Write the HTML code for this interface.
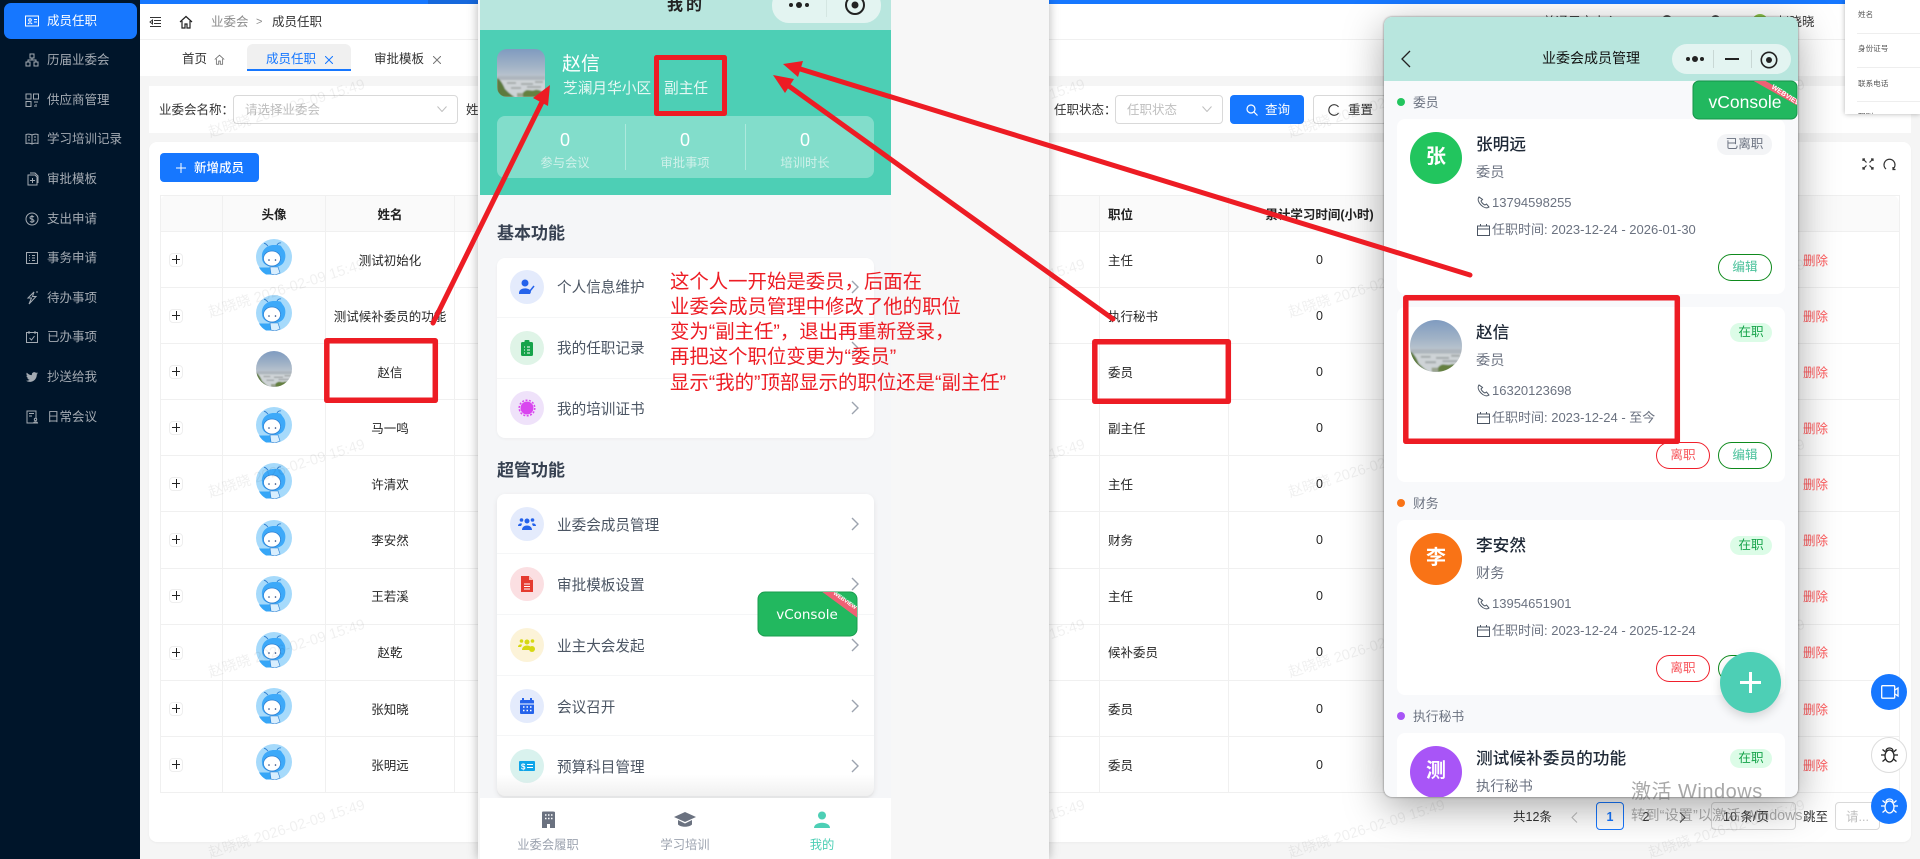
<!DOCTYPE html>
<html lang="zh-CN"><head><meta charset="utf-8"><title>成员任职</title>
<style>
*{box-sizing:border-box}
html,body{margin:0;padding:0;width:1920px;height:859px;overflow:hidden;background:#f5f5f5;font-family:"Liberation Sans","Noto Sans CJK SC",sans-serif;color:#262626}
div,svg,span{position:absolute}
#root{left:0;top:0;width:1920px;height:859px;overflow:hidden}
.t{position:absolute;white-space:nowrap;line-height:20px;height:20px;font-size:12.5px}
.c{transform:translateX(-50%)}
.m{color:#a4abb3;left:47px}
.i{position:absolute;left:25px;width:14px;height:14px;fill:none;stroke:#a4abb3;stroke-width:1}
.w{position:absolute;left:0;font-size:14.6px;color:rgba(0,0,0,.06);transform:rotate(-17.5deg);transform-origin:0 100%;line-height:20px;white-space:nowrap}
.w.l{line-height:10px;height:10px;transform-origin:0 50%;top:848.500px}
.hl{position:absolute;left:160px;width:1739px;height:1px;background:#f0f0f0}
.vl{position:absolute;top:195px;height:597px;width:1px;background:#f0f0f0}
.plus{position:absolute;left:169px;width:14px;height:14px;border:1px solid #eee;border-radius:4px;background:#fff}
.plus:before{content:"";position:absolute;left:2px;top:5px;width:8px;height:1px;background:#222}
.plus:after{content:"";position:absolute;left:6px;top:1px;width:1px;height:9px;background:#222}
.av{position:absolute;left:256px;width:36px;height:36px}
.th{font-weight:700;color:#222;margin-top:1px}
.del{left:1803px;color:#ff5a5c;margin-top:1px}
.ic{position:absolute;left:510px;width:34px;height:34px;border-radius:50%}
.ic svg{left:8px;top:8px;width:18px;height:18px}
.mt{left:557px;font-size:14.6px;color:#4b5563;margin-top:2px}
.chev{position:absolute;left:851px;width:8px;height:14px;fill:none;stroke:#9ca3af;stroke-width:1.4}
.dv{position:absolute;left:497px;width:377px;height:1px;background:#f5f6f7}
.card{position:absolute;left:1397px;width:388px;height:175px;background:#fff;border-radius:8px}
.ava{position:absolute;left:1410px;width:52px;height:52px;border-radius:50%;color:#fff;font-size:20px;font-weight:700;text-align:center;line-height:50px}
.nm{left:1476px;font-size:16.7px;font-weight:500;color:#1f2937;margin-top:1px}
.ro{left:1476px;font-size:14.2px;color:#6b7280;margin-top:1px}
.ph{left:1492px;font-size:13px;color:#6b7280;margin-top:1px}
.btn{position:absolute;width:54px;height:27px;border-radius:14px;background:#fff;font-size:12.6px;line-height:25px;text-align:center}
.ed{left:1718px;border:1px solid #0f8a1d;color:#49c19a}
.lz{left:1656px;border:1px solid #f01f2b;color:#f7545a}
.bd{position:absolute;left:1730px;width:42px;height:19px;border-radius:10px;background:#dcfce7;color:#16a34a;font-size:12.6px;line-height:19px;text-align:center}
.sm{position:absolute;left:1477px;width:13px;height:13px;fill:none;stroke:#4b5563;stroke-width:1}
.dot{position:absolute;left:1397px;width:8px;height:8px;border-radius:50%}
.sec{left:1413px;font-size:12.8px;color:#6b7280;margin-top:1px}
.pop{left:1858px;font-size:7.6px;color:#555}
.fb{position:absolute;left:1871px;width:36px;height:36px;border-radius:50%}
.an{left:670px;font-size:19.4px;color:#ed1c24}
</style></head><body>

<svg width="0" height="0" style="position:absolute">
<defs>
<linearGradient id="sky" x1="0" y1="0" x2="0" y2="1"><stop offset="0" stop-color="#7f9bc0"/><stop offset=".35" stop-color="#a0b2c6"/><stop offset=".62" stop-color="#c0c8d0"/><stop offset="1" stop-color="#c0c8d0"/></linearGradient>
<filter id="sf" x="-10%" y="-10%" width="120%" height="120%"><feGaussianBlur stdDeviation=".7"/></filter>
<symbol id="bot" viewBox="0 0 36 36">
<circle cx="18" cy="18" r="18" fill="#a6dafb"/>
<path d="M12 7C10 5 9 4 8 4.500M21 6C22 4 24 3.500 25 4" stroke="#2f7fd0" stroke-width=".9" fill="none"/>
<path d="M6 19C5 11 11 6 18 6c3 0 6 0 7 1l2 3c2 2 3 6 2 10-1 5-5 8-11 8S6 25 6 19z" fill="#3da9f9"/>
<ellipse cx="16" cy="19.500" rx="8.500" ry="7.500" fill="#fff" stroke="#2f7fd0" stroke-width=".7"/>
<circle cx="13" cy="21" r=".8" fill="#22407a"/><circle cx="19.500" cy="21" r=".8" fill="#22407a"/>
<path d="M3 28.500h11l3 1 2 6H10A18 18 0 0 1 3 28.500z" fill="#36a6f7"/>
<path d="M14 28h8l2 6-5 2-4-1z" fill="#d8eefe" stroke="#2f7fd0" stroke-width=".6"/>
</symbol>
<symbol id="land" viewBox="0 0 48 48">
<rect width="48" height="48" fill="url(#sky)"/>
<g filter="url(#sf)">
<path d="M0 27h48v5H0z" fill="#aeb6bd"/>
<path d="M0 31h48v17H0z" fill="#ced3d6"/>
<path d="M10 33h9v2h-9zM24 34h12v2H24zM38 32h8v2h-8zM14 38h10v2H14zM30 37h14v2H30z" fill="#a7adaf"/>
<path d="M0 29c3 1 6 6 8 11 3 3 6 6 10 8H0z" fill="#5d7a3c"/>
<path d="M24 48c1-4 3-6 6-7 3 0 5 1 8 0 4-1 7 2 10 3v4z" fill="#65803f"/>
<path d="M20 44h6v4h-6z" fill="#9aa38f"/>
</g>
</symbol>
</defs></svg>

<div id="root">
<!-- sidebar -->
<div style="left:0;top:0;width:140px;height:859px;background:#00152a"></div>
<div style="left:4px;top:3px;width:133px;height:36px;background:#1677ff;border-radius:7px"></div>
<svg class="i" style="top:14px;stroke:#fff" viewBox="0 0 14 14"><rect x=".5" y="2" width="13" height="10"/><circle cx="5" cy="6" r="1.300"/><path d="M3 10c.5-1.500 3.500-1.500 4 0M9 5.500h3M9 8h3"/></svg>
<div class="t m" style="top:11px;color:#fff">成员任职</div>
<svg class="i" style="top:53px" viewBox="0 0 14 14"><rect x="5" y="1" width="4" height="4"/><rect x="1" y="9" width="4" height="4"/><rect x="9" y="9" width="4" height="4"/><path d="M7 5v2M3 9V7h8v2"/></svg>
<div class="t m" style="top:50px">历届业委会</div>
<svg class="i" style="top:93px" viewBox="0 0 14 14"><rect x="1" y="1" width="5" height="5"/><rect x="8.500" y="1" width="5" height="5"/><rect x="1" y="8.500" width="5" height="5"/><path d="M9 9h4M11 11v3M9 13h1"/></svg>
<div class="t m" style="top:90px">供应商管理</div>
<svg class="i" style="top:132px" viewBox="0 0 14 14"><path d="M7 3C5 2 3 2 1 2.500v9c2-.5 4-.5 6 .5 2-1 4-1 6-.5v-9C11 2 9 2 7 3zM7 3v9M3 5h2M3 8h2M9 5h2M9 8h2"/></svg>
<div class="t m" style="top:129px">学习培训记录</div>
<svg class="i" style="top:172px" viewBox="0 0 14 14"><path d="M3 3h7l2 2v8H3zM5 1h5l3 3v7M7.500 6v5M5 8.500h5"/></svg>
<div class="t m" style="top:169px">审批模板</div>
<svg class="i" style="top:212px" viewBox="0 0 14 14"><circle cx="7" cy="7" r="6"/><path d="M9 5c-1-1-4-1-4 .8 0 2 4 1 4 3 0 1.600-3 1.600-4 .5M7 3v8"/></svg>
<div class="t m" style="top:209px">支出申请</div>
<svg class="i" style="top:251px" viewBox="0 0 14 14"><rect x="1.500" y="1.500" width="11" height="11"/><path d="M4 4.500h1M4 7h1M4 9.500h1M7 4.500h3M7 7h3M7 9.500h3"/></svg>
<div class="t m" style="top:248px">事务申请</div>
<svg class="i" style="top:291px" viewBox="0 0 14 14"><path d="M9 1 3 7h3.500L4 13l7-7.500H7.500zM11 1l2 0"/></svg>
<div class="t m" style="top:288px">待办事项</div>
<svg class="i" style="top:330px" viewBox="0 0 14 14"><rect x="1.500" y="2.500" width="11" height="10"/><path d="M4 1v3M10 1v3M4.500 8l2 2 3-4"/></svg>
<div class="t m" style="top:327px">已办事项</div>
<svg style="left:26px;top:371px;width:12px;height:12px" viewBox="0 0 24 24"><path fill="#a4abb3" d="M23.950 4.570a10 10 0 0 1-2.820.77 4.960 4.960 0 0 0 2.160-2.720c-.95.55-2 .96-3.120 1.180a4.920 4.920 0 0 0-8.380 4.480A13.980 13.980 0 0 1 1.670 3.150a4.920 4.920 0 0 0 1.520 6.570 4.900 4.900 0 0 1-2.230-.61v.06a4.920 4.920 0 0 0 3.950 4.830 4.900 4.900 0 0 1-2.220.08 4.930 4.930 0 0 0 4.600 3.420A9.870 9.870 0 0 1 0 19.540a13.940 13.940 0 0 0 7.550 2.210c9.050 0 14-7.500 14-14 0-.21 0-.43-.02-.64a10 10 0 0 0 2.460-2.550z"/></svg>
<div class="t m" style="top:367px">抄送给我</div>
<svg class="i" style="top:410px" viewBox="0 0 14 14"><path d="M11 8V1H2v12h6M4 3.500h5M4 6h3"/><circle cx="10.500" cy="9.500" r="1.200"/><path d="M8.500 13c.3-1.500 3.700-1.500 4 0z"/></svg>
<div class="t m" style="top:407px">日常会议</div>

<!-- top bars -->
<div style="left:140px;top:0;width:288px;height:4px;background:#1677ff"></div>
<div style="left:428px;top:0;width:52px;height:4px;background:#1668dc"></div>
<div style="left:1049px;top:0;width:800px;height:4px;background:#1677ff"></div>
<div style="left:140px;top:4px;width:1780px;height:35px;background:#fff"></div>
<div style="left:140px;top:39px;width:1780px;height:1px;background:#f0f0f0"></div>
<div style="left:140px;top:40px;width:1780px;height:36px;background:#fff"></div>
<svg style="left:149px;top:16px;width:13px;height:12px;fill:none;stroke:#333;stroke-width:1" viewBox="0 0 13 12"><path d="M1 1.500h11M5 4.500h7M5 7.500h7M1 10.500h11M3.500 4 1 6l2.500 2z"/></svg>
<svg style="left:179px;top:15px;width:14px;height:14px;fill:none;stroke:#222;stroke-width:1.200" viewBox="0 0 14 14"><path d="M1 7 7 1.500 13 7M3 6v7h3V9h2v4h3V6"/></svg>
<div class="t" style="left:211px;top:12px;color:#8c8c8c">业委会</div>
<div class="t" style="left:256px;top:12px;color:#8c8c8c;font-size:11px">&gt;</div>
<div class="t" style="left:272px;top:12px;color:#333">成员任职</div>

<div class="t" style="left:182px;top:49px;color:#333">首页</div>
<svg style="left:214px;top:54px;width:11px;height:11px;fill:none;stroke:#666;stroke-width:1" viewBox="0 0 14 14"><path d="M1 7 7 1.500 13 7M3 6v7h3V9h2v4h3V6"/></svg>
<div style="left:247px;top:44px;width:104px;height:27px;background:#f0f0f0;border-radius:6px 6px 0 0;border-bottom:2px solid #1677ff"></div>
<div class="t" style="left:266px;top:49px;color:#1677ff">成员任职</div>
<svg style="left:325px;top:56px;width:8px;height:8px;stroke:#1677ff;stroke-width:1" viewBox="0 0 8 8"><path d="M0 0l8 8M8 0 0 8"/></svg>
<div class="t" style="left:374px;top:49px;color:#333">审批模板</div>
<svg style="left:433px;top:56px;width:8px;height:8px;stroke:#777;stroke-width:1" viewBox="0 0 8 8"><path d="M0 0l8 8M8 0 0 8"/></svg>

<!-- top right user info partly hidden -->
<div class="t" style="left:1543px;top:12px;color:#333">普通用户中心</div>
<div style="left:1662px;top:15px;width:10px;height:10px;background:#555;border-radius:5px"></div>
<div style="left:1711px;top:15px;width:9px;height:10px;background:#555;border-radius:5px"></div>
<div style="left:1752px;top:14px;width:16px;height:16px;background:#8bc34a;border-radius:50%"></div>
<div class="t" style="left:1777px;top:12px;font-size:12.5px;color:#333">赵晓晓</div>

<!-- search card -->
<div style="left:149px;top:86px;width:1762px;height:47px;background:#fff"></div>
<div class="t" style="left:159px;top:100px;color:#333">业委会名称：</div>
<div style="left:233px;top:95px;width:225px;height:29px;border:1px solid #d9d9d9;border-radius:4px;background:#fff"></div>
<div class="t" style="left:245px;top:100px;color:#bfbfbf">请选择业委会</div>
<svg style="left:437px;top:106px;width:10px;height:6px;fill:none;stroke:#bfbfbf" viewBox="0 0 10 6"><path d="M.5.500 5 5.500 9.500.500"/></svg>
<div class="t" style="left:466px;top:100px;color:#333">姓名</div>
<div class="t" style="left:1054px;top:100px;color:#333">任职状态：</div>
<div style="left:1115px;top:95px;width:108px;height:29px;border:1px solid #d9d9d9;border-radius:4px;background:#fff"></div>
<div class="t" style="left:1127px;top:100px;color:#bfbfbf">任职状态</div>
<svg style="left:1202px;top:106px;width:10px;height:6px;fill:none;stroke:#bfbfbf" viewBox="0 0 10 6"><path d="M.5.500 5 5.500 9.500.500"/></svg>
<div style="left:1230px;top:95px;width:74px;height:29px;background:#1677ff;border-radius:4px"></div>
<svg style="left:1246px;top:104px;width:12px;height:12px;fill:none;stroke:#fff;stroke-width:1.200" viewBox="0 0 12 12"><circle cx="5" cy="5" r="4"/><path d="M8 8l3.500 3.500"/></svg>
<div class="t" style="left:1265px;top:100px;color:#fff">查询</div>
<div style="left:1313px;top:95px;width:74px;height:29px;background:#fff;border:1px solid #d9d9d9;border-radius:4px"></div>
<svg style="left:1328px;top:104px;width:12px;height:12px;fill:none;stroke:#333;stroke-width:1.100" viewBox="0 0 12 12"><path d="M10.500 3A5.300 5.300 0 1 0 10.500 9"/></svg>
<div class="t" style="left:1348px;top:100px;color:#333">重置</div>

<!-- main card -->
<div style="left:149px;top:142px;width:1762px;height:700px;background:#fff;border-radius:8px;box-shadow:0 1px 2px rgba(0,0,0,.04)"></div>
<div style="left:160px;top:153px;width:99px;height:29px;background:#1677ff;border-radius:4px"></div>
<svg style="left:175px;top:162px;width:12px;height:12px;stroke:#fff" viewBox="0 0 12 12"><path d="M6 1v10M1 6h10"/></svg>
<div class="t" style="left:194px;top:158px;color:#fff;font-weight:500">新增成员</div>
<svg style="left:1862px;top:158px;width:12px;height:12px;fill:none;stroke:#333;stroke-width:1.200" viewBox="0 0 12 12"><path d="M1 1l3.500 3.500M11 1 7.500 4.500M1 11l3.500-3.500M11 11 7.500 7.500M1 3V1h2M9 1h2v2M1 9v2h2M11 9v2H9"/></svg>
<svg style="left:1883px;top:158px;width:13px;height:13px;fill:none;stroke:#333;stroke-width:1.200" viewBox="0 0 13 13"><path d="M3 11A5.500 5.500 0 1 1 10 11M10 9v2.500h2.500"/></svg>

<!-- table -->
<div style="left:160px;top:195px;width:1739px;height:37px;background:#fafafa;border-radius:8px 8px 0 0"></div>
<div class="hl" style="top:195px"></div><div class="hl" style="top:231px"></div><div class="hl" style="top:287px"></div><div class="hl" style="top:343px"></div><div class="hl" style="top:399px"></div><div class="hl" style="top:455px"></div><div class="hl" style="top:511px"></div><div class="hl" style="top:568px"></div><div class="hl" style="top:624px"></div><div class="hl" style="top:680px"></div><div class="hl" style="top:736px"></div><div class="hl" style="top:792px"></div>
<div class="vl" style="left:160px"></div><div class="vl" style="left:222px"></div><div class="vl" style="left:325px"></div><div class="vl" style="left:454px"></div><div class="vl" style="left:1099px"></div><div class="vl" style="left:1228px"></div><div class="vl" style="left:1899px"></div>
<div class="t c th" style="left:274px;top:204px">头像</div>
<div class="t c th" style="left:390px;top:204px">姓名</div>
<div class="t th" style="left:1108px;top:204px">职位</div>
<div class="t c th" style="left:1319.500px;top:204px">累计学习时间(小时)</div>

<div class="plus" style="top:253px"></div><svg class="av" style="top:239px"><use href="#bot"/></svg><div class="t c" style="left:390px;top:251px">测试初始化</div><div class="t" style="left:1108px;top:251px">主任</div><div class="t c" style="left:1319.500px;top:250px">0</div><div class="t del" style="top:250px">删除</div>
<div class="plus" style="top:309px"></div><svg class="av" style="top:295px"><use href="#bot"/></svg><div class="t c" style="left:390px;top:307px">测试候补委员的功能</div><div class="t" style="left:1108px;top:307px">执行秘书</div><div class="t c" style="left:1319.500px;top:306px">0</div><div class="t del" style="top:306px">删除</div>
<div class="plus" style="top:365px"></div><svg class="av" style="top:351px;border-radius:50%"><use href="#land"/></svg><div class="t c" style="left:390px;top:363px">赵信</div><div class="t" style="left:1108px;top:363px">委员</div><div class="t c" style="left:1319.500px;top:362px">0</div><div class="t del" style="top:362px">删除</div>
<div class="plus" style="top:421px"></div><svg class="av" style="top:407px"><use href="#bot"/></svg><div class="t c" style="left:390px;top:419px">马一鸣</div><div class="t" style="left:1108px;top:419px">副主任</div><div class="t c" style="left:1319.500px;top:418px">0</div><div class="t del" style="top:418px">删除</div>
<div class="plus" style="top:477px"></div><svg class="av" style="top:463px"><use href="#bot"/></svg><div class="t c" style="left:390px;top:475px">许清欢</div><div class="t" style="left:1108px;top:475px">主任</div><div class="t c" style="left:1319.500px;top:474px">0</div><div class="t del" style="top:474px">删除</div>
<div class="plus" style="top:533px"></div><svg class="av" style="top:520px"><use href="#bot"/></svg><div class="t c" style="left:390px;top:531px">李安然</div><div class="t" style="left:1108px;top:531px">财务</div><div class="t c" style="left:1319.500px;top:530px">0</div><div class="t del" style="top:530px">删除</div>
<div class="plus" style="top:589px"></div><svg class="av" style="top:576px"><use href="#bot"/></svg><div class="t c" style="left:390px;top:587px">王若溪</div><div class="t" style="left:1108px;top:587px">主任</div><div class="t c" style="left:1319.500px;top:586px">0</div><div class="t del" style="top:586px">删除</div>
<div class="plus" style="top:646px"></div><svg class="av" style="top:632px"><use href="#bot"/></svg><div class="t c" style="left:390px;top:643px">赵乾</div><div class="t" style="left:1108px;top:643px">候补委员</div><div class="t c" style="left:1319.500px;top:642px">0</div><div class="t del" style="top:642px">删除</div>
<div class="plus" style="top:702px"></div><svg class="av" style="top:688px"><use href="#bot"/></svg><div class="t c" style="left:390px;top:700px">张知晓</div><div class="t" style="left:1108px;top:700px">委员</div><div class="t c" style="left:1319.500px;top:699px">0</div><div class="t del" style="top:699px">删除</div>
<div class="plus" style="top:758px"></div><svg class="av" style="top:744px"><use href="#bot"/></svg><div class="t c" style="left:390px;top:756px">张明远</div><div class="t" style="left:1108px;top:756px">委员</div><div class="t c" style="left:1319.500px;top:755px">0</div><div class="t del" style="top:755px">删除</div>

<!-- pagination -->
<div class="t" style="left:1513px;top:807px;color:#333">共12条</div>
<svg style="left:1571px;top:812px;width:7px;height:11px;fill:none;stroke:#bbb" viewBox="0 0 7 11"><path d="M6 .500 1 5.500l5 5"/></svg>
<div style="left:1596px;top:802px;width:28px;height:28px;border:1px solid #1677ff;border-radius:4px"></div>
<div class="t c" style="left:1610px;top:807px;color:#1677ff;font-weight:700">1</div>
<div class="t c" style="left:1646px;top:807px;color:#333">2</div>
<svg style="left:1679px;top:812px;width:7px;height:11px;fill:none;stroke:#333" viewBox="0 0 7 11"><path d="M1 .500 6 5.500l-5 5"/></svg>
<div style="left:1711px;top:802px;width:85px;height:28px;border:1px solid #d9d9d9;border-radius:4px"></div>
<div class="t" style="left:1723px;top:807px;color:#333">10 条/页</div>
<div class="t" style="left:1803px;top:807px;color:#333">跳至</div>
<div style="left:1835px;top:802px;width:45px;height:28px;border:1px solid #d9d9d9;border-radius:4px;background:#fff"></div>
<div class="t" style="left:1846px;top:807px;color:#bfbfbf">请...</div>

<!-- watermarks -->
<div style="left:0;top:0;width:1920px;height:859px;overflow:hidden">
<div class="w" style="left:212px;top:123px">赵晓晓 2026-02-09 15:49</div>
<div class="w" style="left:212px;top:303px">赵晓晓 2026-02-09 15:49</div>
<div class="w" style="left:212px;top:483px">赵晓晓 2026-02-09 15:49</div>
<div class="w" style="left:212px;top:663px">赵晓晓 2026-02-09 15:49</div>
<div class="w l" style="left:209px">赵晓晓 2026-02-09 15:49</div>
<div class="w" style="left:932px;top:123px">赵晓晓 2026-02-09 15:49</div>
<div class="w" style="left:932px;top:303px">赵晓晓 2026-02-09 15:49</div>
<div class="w" style="left:932px;top:483px">赵晓晓 2026-02-09 15:49</div>
<div class="w" style="left:932px;top:663px">赵晓晓 2026-02-09 15:49</div>
<div class="w l" style="left:929px">赵晓晓 2026-02-09 15:49</div>
<div class="w" style="left:1292px;top:123px">赵晓晓 2026-02-09 15:49</div>
<div class="w" style="left:1292px;top:303px">赵晓晓 2026-02-09 15:49</div>
<div class="w" style="left:1292px;top:483px">赵晓晓 2026-02-09 15:49</div>
<div class="w" style="left:1292px;top:663px">赵晓晓 2026-02-09 15:49</div>
<div class="w l" style="left:1289px">赵晓晓 2026-02-09 15:49</div>
<div class="w" style="left:1652px;top:123px">赵晓晓 2026-02-09 15:49</div>
<div class="w" style="left:1652px;top:303px">赵晓晓 2026-02-09 15:49</div>
<div class="w" style="left:1652px;top:483px">赵晓晓 2026-02-09 15:49</div>
<div class="w" style="left:1652px;top:663px">赵晓晓 2026-02-09 15:49</div>
<div class="w l" style="left:1649px">赵晓晓 2026-02-09 15:49</div>
</div>

<!-- phone 1 -->
<div style="left:478px;top:0;width:571px;height:859px;background:#f7f7f7;box-shadow:0 0 10px rgba(0,0,0,.3)"></div>
<div style="left:0;top:0;width:1920px;height:859px;filter:blur(.3px);overflow:hidden">
<div style="left:480px;top:0;width:411px;height:859px;background:#f5f6f8"></div>
<div style="left:480px;top:0;width:411px;height:30px;background:#b8e6de"></div>
<div class="t c" style="left:686px;top:-4px;font-size:16px;font-weight:700;letter-spacing:3px;color:#222">我的</div>
<div style="left:772px;top:-12px;width:109px;height:35px;background:#e3f4f1;border-radius:17px"></div>
<div style="left:789px;top:3px;width:4px;height:4px;background:#222;border-radius:50%"></div>
<div style="left:796px;top:2px;width:6px;height:6px;background:#222;border-radius:50%"></div>
<div style="left:805px;top:3px;width:4px;height:4px;background:#222;border-radius:50%"></div>
<div style="left:826px;top:0;width:1px;height:17px;background:#d4e6e2"></div>
<svg style="left:844px;top:-6px;width:22px;height:22px;fill:none" viewBox="0 0 22 22"><circle cx="11" cy="11" r="9" stroke="#222" stroke-width="2"/><circle cx="11" cy="11" r="3.500" fill="#222"/></svg>
<div style="left:480px;top:30px;width:411px;height:165px;background:#4dcfb5"></div>
<svg style="left:497px;top:49px;width:48px;height:48px;border-radius:10px"><use href="#land"/></svg>
<div class="t" style="left:562px;top:55px;font-size:19px;color:#fff">赵信</div>
<div class="t" style="left:563px;top:79px;font-size:14.7px;color:#e6f8f4">芝澜月华小区</div>
<div class="t" style="left:664px;top:79px;font-size:14.7px;color:#e6f8f4">副主任</div>
<div style="left:497px;top:116px;width:377px;height:62px;background:rgba(255,255,255,.3);border-radius:8px"></div>
<div style="left:625px;top:124px;width:1px;height:46px;background:rgba(255,255,255,.35)"></div>
<div style="left:745px;top:124px;width:1px;height:46px;background:rgba(255,255,255,.35)"></div>
<div class="t c" style="left:565px;top:130px;font-size:18px;color:#fff">0</div>
<div class="t c" style="left:685px;top:130px;font-size:18px;color:#fff">0</div>
<div class="t c" style="left:805px;top:130px;font-size:18px;color:#fff">0</div>
<div class="t c" style="left:565px;top:153px;font-size:12.3px;color:#d0f1ea">参与会议</div>
<div class="t c" style="left:685px;top:153px;font-size:12.3px;color:#d0f1ea">审批事项</div>
<div class="t c" style="left:805px;top:153px;font-size:12.3px;color:#d0f1ea">培训时长</div>

<div class="t" style="left:497px;top:224px;font-size:17px;font-weight:700;color:#374151">基本功能</div>
<div style="left:497px;top:258px;width:377px;height:180px;background:#fff;border-radius:8px;box-shadow:0 1px 3px rgba(0,0,0,.04)"></div>
<div class="dv" style="top:317px"></div><div class="dv" style="top:378px"></div>
<div class="ic" style="top:270px;background:#e4ebfc"><svg viewBox="0 0 18 18"><circle cx="7" cy="5" r="3.500" fill="#2563eb"/><path d="M1 15c0-6 11-6 12-1l-1 2H1z" fill="#2563eb"/><path d="M12 13l4-5" stroke="#2563eb" stroke-width="1.500"/></svg></div>
<div class="t mt" style="top:276px">个人信息维护</div>
<div class="ic" style="top:331px;background:#dff4e7"><svg viewBox="0 0 18 18"><rect x="3" y="3" width="12" height="14" rx="1.500" fill="#16a34a"/><rect x="6.500" y="1" width="5" height="3.500" rx="1" fill="#16a34a"/><path d="M6 8h1M9 8h3M6 11h1M9 11h3M6 14h1M9 14h3" stroke="#fff"/></svg></div>
<div class="t mt" style="top:337px">我的任职记录</div>
<div class="ic" style="top:391px;background:#efe2fa"><svg viewBox="0 0 18 18"><circle cx="9" cy="9" r="6.500" fill="#d946ef"/><circle cx="9" cy="9" r="7.800" fill="none" stroke="#d946ef" stroke-width="1.500" stroke-dasharray="2 1.500"/></svg></div>
<div class="t mt" style="top:398px">我的培训证书</div>
<svg class="chev" style="top:280px" viewBox="0 0 8 14"><path d="M1 1l6 6-6 6"/></svg>
<svg class="chev" style="top:341px" viewBox="0 0 8 14"><path d="M1 1l6 6-6 6"/></svg>
<svg class="chev" style="top:401px" viewBox="0 0 8 14"><path d="M1 1l6 6-6 6"/></svg>

<div class="t" style="left:497px;top:461px;font-size:17px;font-weight:700;color:#374151">超管功能</div>
<div style="left:497px;top:494px;width:377px;height:302px;background:#fff;border-radius:8px;box-shadow:0 2px 6px rgba(0,0,0,.08)"></div>
<div class="dv" style="top:553px"></div><div class="dv" style="top:614px"></div><div class="dv" style="top:675px"></div><div class="dv" style="top:735px"></div>
<div class="ic" style="top:507px;background:#e4ebfc"><svg viewBox="0 0 18 18"><circle cx="9" cy="6" r="2.500" fill="#2563eb"/><circle cx="3.500" cy="5" r="1.800" fill="#2563eb"/><circle cx="14.500" cy="5" r="1.800" fill="#2563eb"/><path d="M4 15c0-6 10-6 10 0zM0 11c0-3 4-3 4-2l-1 2zM18 11c0-3-4-3-4-2l1 2z" fill="#2563eb"/></svg></div>
<div class="t mt" style="top:514px">业委会成员管理</div>
<div class="ic" style="top:567px;background:#fbdfe2"><svg viewBox="0 0 18 18"><path d="M3 1h8l4 4v12H3z" fill="#e53a2f"/><path d="M6 9h6M6 11.500h6M6 14h6" stroke="#fff"/><path d="M11 1l4 4h-4z" fill="#f9c0ba"/></svg></div>
<div class="t mt" style="top:574px">审批模板设置</div>
<div class="ic" style="top:628px;background:#fcf3d8"><svg viewBox="0 0 18 18"><circle cx="9" cy="6" r="2.500" fill="#d6d812"/><circle cx="3.500" cy="5" r="1.800" fill="#d6d812"/><circle cx="14.500" cy="5" r="1.800" fill="#d6d812"/><path d="M4 14c0-6 10-6 10 0zM0 11c0-3 4-3 4-2l-1 2z" fill="#d6d812"/><circle cx="14" cy="13" r="3" fill="#d6d812"/></svg></div>
<div class="t mt" style="top:635px">业主大会发起</div>
<div class="ic" style="top:689px;background:#e4ebfc"><svg viewBox="0 0 18 18"><rect x="2" y="3" width="14" height="14" rx="1" fill="#2563eb"/><path d="M5 1v4M13 1v4" stroke="#2563eb" stroke-width="2"/><path d="M2 7h14" stroke="#fff"/><path d="M5 10h1.500M8.500 10H10M12 10h1.500M5 13.500h1.500M8.500 13.500H10M12 13.500h1.500" stroke="#fff" stroke-width="1.500"/></svg></div>
<div class="t mt" style="top:696px">会议召开</div>
<div class="ic" style="top:749px;background:#d9f2ee"><svg viewBox="0 0 18 18"><rect x="1" y="4" width="16" height="10" rx="1" fill="#0ea5e9"/><path d="M9 7.500h6M9 10.500h6" stroke="#fff"/><text x="3" y="12.500" font-size="8" font-family="Liberation Sans" font-weight="700" fill="#fff">$</text></svg></div>
<div class="t mt" style="top:756px">预算科目管理</div>
<svg class="chev" style="top:517px" viewBox="0 0 8 14"><path d="M1 1l6 6-6 6"/></svg>
<svg class="chev" style="top:577px" viewBox="0 0 8 14"><path d="M1 1l6 6-6 6"/></svg>
<svg class="chev" style="top:638px" viewBox="0 0 8 14"><path d="M1 1l6 6-6 6"/></svg>
<svg class="chev" style="top:699px" viewBox="0 0 8 14"><path d="M1 1l6 6-6 6"/></svg>
<svg class="chev" style="top:759px" viewBox="0 0 8 14"><path d="M1 1l6 6-6 6"/></svg>
<div style="left:497px;top:774px;width:377px;height:24px;background:linear-gradient(rgba(240,240,240,0),rgba(225,225,225,.55));border-radius:0 0 8px 8px"></div>

<div style="left:480px;top:798px;width:411px;height:61px;background:#fff"></div>
<svg style="left:541px;top:811px;width:16px;height:18px" viewBox="0 0 16 18"><path d="M1 1.500Q1 .5 2 .5h10q2 0 2 1V17H9v-4H6v4H1z" fill="#6b7280"/><path d="M4 4h1.500M7 4h1.500M10 4h1.500M4 7.500h1.500M7 7.500h1.500M10 7.500h1.500" stroke="#fff" stroke-width="1.500"/></svg>
<svg style="left:674px;top:812px;width:22px;height:16px" viewBox="0 0 22 16"><path d="M11 0 22 5 11 10 0 5z" fill="#6b7280"/><path d="M4 8v4.500c3 3 11 3 14 0V8l-7 3.500z" fill="#6b7280"/></svg>
<svg style="left:814px;top:811px;width:16px;height:18px" viewBox="0 0 16 18"><circle cx="8" cy="4.500" r="4" fill="#4dcfb5"/><path d="M0 17c0-7 16-7 16 0z" fill="#4dcfb5"/></svg>
<div class="t c" style="left:548px;top:834px;font-size:12.3px;color:#9ca3af;margin-top:1px">业委会履职</div>
<div class="t c" style="left:685px;top:834px;font-size:12.3px;color:#9ca3af;margin-top:1px">学习培训</div>
<div class="t c" style="left:822px;top:834px;font-size:12.3px;color:#4dcfb5;margin-top:1px">我的</div>

<!-- vconsole 1 -->
<svg style="left:757px;top:591px;width:101px;height:46px" viewBox="0 0 101 46"><defs><clipPath id="vc1"><rect x="1" y="1" width="99" height="44" rx="7"/></clipPath></defs><rect x="1" y="1" width="99" height="44" rx="7" fill="#22b85f" stroke="#1a9c4e"/><g clip-path="url(#vc1)"><path d="M64 0h12l26 18v10z" fill="#ee6174"/><text x="0" y="0" font-size="5.500" fill="#fff" font-family="Liberation Sans" font-weight="700" transform="translate(76 3) rotate(35)">WEBVIEW</text></g><text x="50" y="28" font-size="13.500" fill="#fff" text-anchor="middle" font-family="DejaVu Sans">vConsole</text></svg>
</div>

<!-- phone 2 -->
<div style="left:1384px;top:17px;width:414px;height:780px;background:#f8f9fb;border-radius:8px;box-shadow:0 10px 40px rgba(0,0,0,.35),0 0 2px rgba(0,0,0,.5)"></div>
<div style="left:1384px;top:17px;width:414px;height:780px;border-radius:8px;overflow:hidden">
<div style="left:-1384px;top:-17px;width:1920px;height:859px">
<div style="left:1384px;top:17px;width:414px;height:64px;background:#b8e6de"></div>
<svg style="left:1400px;top:50px;width:11px;height:18px;fill:none;stroke:#222;stroke-width:1.300" viewBox="0 0 11 18"><path d="M10 1 2 9l8 8"/></svg>
<div class="t c" style="left:1591px;top:48px;font-size:14px;color:#111">业委会成员管理</div>
<div style="left:1672px;top:44px;width:119px;height:30px;background:#e3f4f1;border-radius:15px"></div>
<div style="left:1686px;top:57px;width:4px;height:4px;background:#222;border-radius:50%"></div>
<div style="left:1692px;top:56px;width:6px;height:6px;background:#222;border-radius:50%"></div>
<div style="left:1700px;top:57px;width:4px;height:4px;background:#222;border-radius:50%"></div>
<div style="left:1713px;top:50px;width:1px;height:18px;background:#c9d8d5"></div>
<div style="left:1725px;top:58px;width:14px;height:2px;background:#222"></div>
<div style="left:1751px;top:50px;width:1px;height:18px;background:#c9d8d5"></div>
<svg style="left:1760px;top:51px;width:18px;height:18px;fill:none" viewBox="0 0 18 18"><circle cx="9" cy="9" r="7.700" stroke="#222" stroke-width="1.600"/><circle cx="9" cy="9" r="3" fill="#222"/></svg>

<div class="dot" style="top:98px;background:#22c55e"></div><div class="t sec" style="top:92px">委员</div>
<div class="card" style="top:119px"></div>
<div class="ava" style="top:132px;background:#22c55e">张</div>
<div class="t nm" style="top:134px">张明远</div>
<div class="t ro" style="top:162px">委员</div>
<svg class="sm" style="top:196px" viewBox="0 0 13 13"><path d="M2 1C.5 3 1 6 4 9s6 3.500 8 2l-2.500-3L8 9C6.500 8.500 4.500 6.500 4 5l1.500-1.500z"/></svg>
<div class="t ph" style="top:192px">13794598255</div>
<svg class="sm" style="top:223px" viewBox="0 0 13 13"><rect x=".5" y="3" width="12" height="9.500"/><path d="M.5 6h12M3.500 1v2M9.500 1v2"/></svg>
<div class="t ph" style="top:219px">任职时间: 2023-12-24 - 2026-01-30</div>
<div class="bd" style="left:1717px;top:134px;width:55px;height:21px;line-height:21px;background:#f3f4f6;color:#6b7280">已离职</div>
<div class="btn ed" style="top:254px">编辑</div>

<div class="card" style="top:307px"></div>
<svg class="ava" style="top:320px"><use href="#land"/></svg>
<div class="t nm" style="top:322px">赵信</div>
<div class="t ro" style="top:350px">委员</div>
<svg class="sm" style="top:384px" viewBox="0 0 13 13"><path d="M2 1C.5 3 1 6 4 9s6 3.500 8 2l-2.500-3L8 9C6.500 8.500 4.500 6.500 4 5l1.500-1.500z"/></svg>
<div class="t ph" style="top:380px">16320123698</div>
<svg class="sm" style="top:411px" viewBox="0 0 13 13"><rect x=".5" y="3" width="12" height="9.500"/><path d="M.5 6h12M3.500 1v2M9.500 1v2"/></svg>
<div class="t ph" style="top:407px">任职时间: 2023-12-24 - 至今</div>
<div class="bd" style="top:323px">在职</div>
<div class="btn lz" style="top:442px">离职</div><div class="btn ed" style="top:442px">编辑</div>

<div class="dot" style="top:499px;background:#f97316"></div><div class="t sec" style="top:493px">财务</div>
<div class="card" style="top:520px"></div>
<div class="ava" style="top:533px;background:#f97316">李</div>
<div class="t nm" style="top:535px">李安然</div>
<div class="t ro" style="top:563px">财务</div>
<svg class="sm" style="top:597px" viewBox="0 0 13 13"><path d="M2 1C.5 3 1 6 4 9s6 3.500 8 2l-2.500-3L8 9C6.500 8.500 4.500 6.500 4 5l1.500-1.500z"/></svg>
<div class="t ph" style="top:593px">13954651901</div>
<svg class="sm" style="top:624px" viewBox="0 0 13 13"><rect x=".5" y="3" width="12" height="9.500"/><path d="M.5 6h12M3.500 1v2M9.500 1v2"/></svg>
<div class="t ph" style="top:620px">任职时间: 2023-12-24 - 2025-12-24</div>
<div class="bd" style="top:536px">在职</div>
<div class="btn lz" style="top:655px">离职</div><div class="btn ed" style="top:655px">编辑</div>

<div class="dot" style="top:712px;background:#a855f7"></div><div class="t sec" style="top:706px">执行秘书</div>
<div class="card" style="top:733px;height:64px;border-radius:8px 8px 0 0"></div>
<div class="ava" style="top:746px;background:#a855f7">测</div>
<div class="t nm" style="top:748px">测试候补委员的功能</div>
<div class="t ro" style="top:776px">执行秘书</div>
<div class="bd" style="top:749px">在职</div>

<div style="left:1719.500px;top:652px;width:61px;height:61px;border-radius:50%;background:#4dcfb5;box-shadow:0 4px 10px rgba(0,0,0,.15)"></div>
<div style="left:1740px;top:681px;width:21px;height:3px;background:#fff"></div>
<div style="left:1749px;top:672px;width:3px;height:21px;background:#fff"></div>

<svg style="left:1692px;top:80px;width:106px;height:40px" viewBox="0 0 106 40"><defs><clipPath id="vc2"><rect x="1" y="1" width="104" height="38" rx="6"/></clipPath></defs><rect x="1" y="1" width="104" height="38" rx="6" fill="#22b85f" stroke="#17934a"/><g clip-path="url(#vc2)"><path d="M60 0h12l36 21v6z" fill="#ee6174"/><text font-size="7" fill="#fff" font-family="Liberation Sans" font-weight="700" transform="translate(79 8) rotate(33)">WEBVIEW</text></g><text x="53" y="28" font-size="17.500" fill="#fff" text-anchor="middle" font-family="Liberation Sans">vConsole</text></svg>
</div></div>

<!-- annotations -->
<svg style="left:0;top:0;width:1920px;height:859px;pointer-events:none" viewBox="0 0 1920 859">
<g fill="none" stroke="#ed1c24" stroke-linejoin="round">
<rect x="326.800" y="340.800" width="108.500" height="59.500" stroke-width="5.500"/>
<rect x="656.500" y="57.500" width="68" height="56" stroke-width="5"/>
<rect x="1094.800" y="341.800" width="133.500" height="59.500" stroke-width="5.500"/>
<rect x="1405.800" y="297.800" width="271.500" height="143.500" stroke-width="5.500"/>
<g stroke-width="5" stroke-linecap="round"><path d="M433 323 543 100"/><path d="M1470 275 797 68"/><path d="M1113 319 786 84"/></g>
</g>
<g fill="#ed1c24"><path d="M550 85 533 98 548 106z"/><path d="M783 64 803 61 798 77z"/><path d="M773 75 794 79 785 93z"/></g>
</svg>
<div class="t an" style="top:272px">这个人一开始是委员，后面在</div>
<div class="t an" style="top:297px">业委会成员管理中修改了他的职位</div>
<div class="t an" style="top:322px">变为“副主任”，退出再重新登录，</div>
<div class="t an" style="top:347px">再把这个职位变更为“委员”</div>
<div class="t an" style="top:373px">显示“我的”顶部显示的职位还是“副主任”</div>

<!-- popup top right -->
<div style="left:1845px;top:0;width:75px;height:114px;background:#fff;box-shadow:0 0 5px rgba(0,0,0,.3)"></div>
<div class="t pop" style="top:5px">姓名</div>
<div class="t pop" style="top:39px">身份证号</div>
<div class="t pop" style="top:74px">联系电话</div>
<div style="left:1845px;top:0;width:75px;height:114px;overflow:hidden"><div class="t pop" style="left:13px;top:107px">职别</div></div>
<div style="left:1857px;top:33px;width:63px;height:1px;background:#eee"></div>
<div style="left:1857px;top:67px;width:63px;height:1px;background:#eee"></div>
<div style="left:1857px;top:101px;width:63px;height:1px;background:#eee"></div>

<!-- float buttons -->
<div class="fb" style="top:674px;background:#1677ff"></div>
<svg style="left:1881px;top:685px;width:18px;height:14px;fill:none;stroke:#fff;stroke-width:1.300" viewBox="0 0 18 14"><rect x=".7" y=".7" width="13" height="12.500" rx="1"/><path d="M14 5l3-2v8l-3-2"/></svg>
<div class="fb" style="top:737px;background:#fff;border:1px solid #ddd"></div>
<svg style="left:1881px;top:746px;width:17px;height:17px;fill:none;stroke:#222;stroke-width:1.300" viewBox="0 0 17 17"><ellipse cx="8.500" cy="10" rx="4.500" ry="6"/><path d="M5 5c0-4 7-4 7 0M4 9H0M13 9h4M4.500 6 1.500 3.500M12.500 6l3-2.500M4.500 13l-3 2.500M12.500 13l3 2.500"/></svg>
<div class="fb" style="top:788px;background:#1677ff"></div>
<svg style="left:1881px;top:797px;width:17px;height:17px;fill:none;stroke:#fff;stroke-width:1.300" viewBox="0 0 17 17"><ellipse cx="8.500" cy="10" rx="4.500" ry="6"/><path d="M5 5c0-4 7-4 7 0M4 9H0M13 9h4M4.500 6 1.500 3.500M12.500 6l3-2.500M4.500 13l-3 2.500M12.500 13l3 2.500"/></svg>

<!-- windows activation -->
<div class="t" style="left:1631px;top:782px;font-size:20px;letter-spacing:.5px;color:rgba(110,110,110,.6)">激活 Windows</div>
<div class="t" style="left:1631px;top:806px;font-size:14.300px;color:rgba(110,110,110,.6)">转到“设置”以激活 Windows</div>
</div>
</body></html>
